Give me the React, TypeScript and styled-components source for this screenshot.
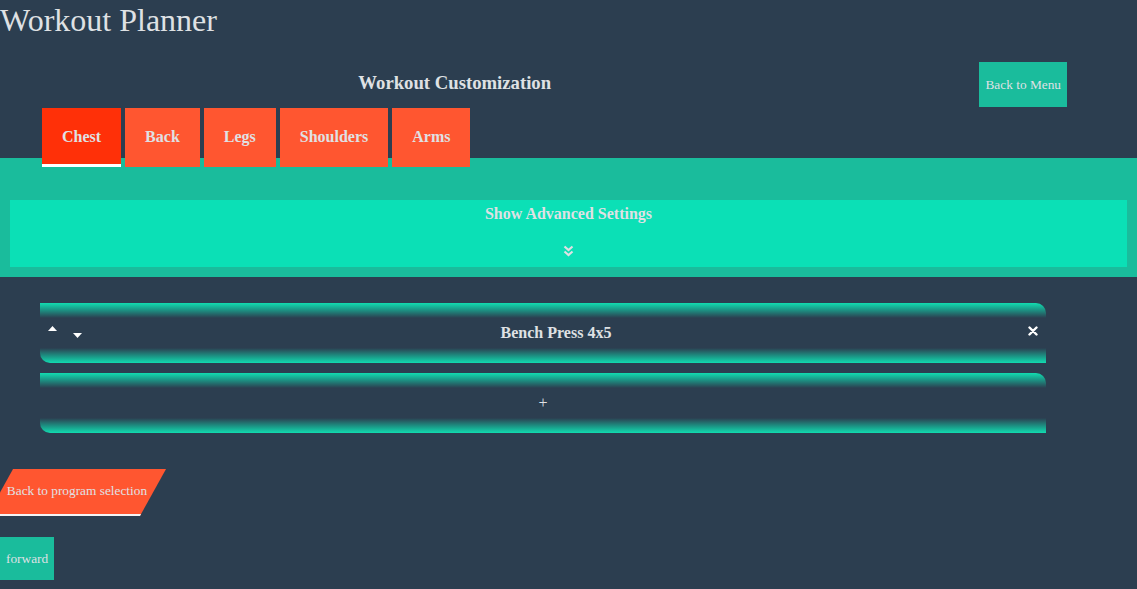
import React, { useState } from "react";
import styled, { createGlobalStyle } from "styled-components";

const BG = "#2c3e50";
const TEAL = "#1abc9c";
const TEAL_LIGHT = "#0be0b6";
const ORANGE = "#ff5630";
const ORANGE_ACTIVE = "#ff3008";
const TEXT = "#dfe1e4";

const GlobalStyle = createGlobalStyle`
  html, body {
    margin: 0;
    padding: 0;
    background: ${BG};
    color: ${TEXT};
    font-family: "Liberation Serif", "Times New Roman", serif;
  }
`;

const Page = styled.div`
  min-height: 589px;
  background: ${BG};
  overflow: hidden;
`;

const Title = styled.h1`
  margin: 0;
  padding-top: 2px;
  font-size: 32px;
  font-weight: normal;
  line-height: 37px;
`;

const HeaderRow = styled.div`
  display: flex;
  align-items: center;
  margin-top: 23px;
  padding-right: 70px;
`;

const Heading = styled.h3`
  flex: 1;
  margin: 0 70px 3px 0;
  text-align: center;
  font-size: 18.72px;
  font-weight: bold;
`;

const PlainButton = styled.button<{ $h: number }>`
  height: ${(p) => p.$h}px;
  padding: 0 6px;
  border: none;
  background: ${TEAL};
  color: ${TEXT};
  font-family: "Liberation Serif", "Times New Roman", serif;
  font-size: 13.33px;
  cursor: pointer;
`;

const TabBar = styled.div`
  position: relative;
  z-index: 1;
  display: flex;
  gap: 4px;
  margin: 1px 0 -9px 42px;
`;

const Tab = styled.button<{ $active?: boolean }>`
  height: 59px;
  padding: 0 20px 1px;
  border: none;
  background: ${(p) => (p.$active ? ORANGE_ACTIVE : ORANGE)};
  box-shadow: ${(p) => (p.$active ? "inset 0 -3px 0 #ffffff" : "none")};
  color: ${TEXT};
  font-family: "Liberation Serif", "Times New Roman", serif;
  font-size: 16px;
  font-weight: bold;
  cursor: pointer;
`;

const SettingsBand = styled.div`
  background: ${TEAL};
  padding: 42px 10px 10px;
`;

const SettingsPanel = styled.div`
  height: 67px;
  background: ${TEAL_LIGHT};
  display: flex;
  flex-direction: column;
  align-items: center;
  font-size: 16px;
  font-weight: bold;
  padding-top: 5px;
  box-sizing: border-box;
  cursor: pointer;
`;

const ChevronWrap = styled.div`
  margin-top: 22px;
  line-height: 0;
`;

const CardList = styled.div`
  display: flex;
  flex-direction: column;
  gap: 10px;
  margin: 26px 0 0 40px;
  width: 1006px;
`;

const Card = styled.div`
  height: 60px;
  border-radius: 0 10px 0 10px;
  background: linear-gradient(
    to bottom,
    #12dcb0 0px,
    #1a9d8a 6px,
    ${BG} 15px,
    ${BG} 45px,
    #1a9d8a 54px,
    #12dcb0 60px
  );
  display: flex;
  align-items: center;
  box-sizing: border-box;
`;

const Arrows = styled.div`
  display: flex;
  align-items: center;
  gap: 16px;
  padding-left: 8px;
  width: 70px;
  box-sizing: border-box;
`;

const ArrowBtn = styled.span<{ $down?: boolean }>`
  display: inline-block;
  line-height: 0;
  margin-top: ${(p) => (p.$down ? "4px" : "-10px")};
  cursor: pointer;
`;

const CardTitle = styled.div`
  flex: 1;
  text-align: center;
  font-size: 16px;
  font-weight: bold;
`;

const CloseBtn = styled.span`
  width: 44px;
  display: flex;
  justify-content: flex-end;
  padding-right: 8px;
  box-sizing: border-box;
  line-height: 0;
  margin-top: -4px;
  cursor: pointer;
`;

const AddCard = styled(Card)`
  justify-content: center;
  font-size: 16px;
  cursor: pointer;
`;

const Footer = styled.div`
  display: flex;
  flex-direction: column;
  align-items: flex-start;
  gap: 21px;
  margin-top: 36px;
`;

const SkewButton = styled.button`
  height: 47px;
  width: 153px;
  padding: 0;
  border: none;
  border-bottom: 2px solid #f4f4f4;
  background: ${ORANGE};
  transform: skewX(-29deg);
  color: ${TEXT};
  font-family: "Liberation Serif", "Times New Roman", serif;
  font-size: 13.33px;
  cursor: pointer;
`;

const Unskew = styled.span`
  display: inline-block;
  transform: skewX(29deg);
  margin: 0 1px 1px 0;
`;

const Caret = ({ down }: { down?: boolean }) => (
  <svg width="9" height="5" viewBox="0 0 9 5">
    {down ? (
      <polygon points="0,0 9,0 4.5,5" fill="#fff" />
    ) : (
      <polygon points="0,5 9,5 4.5,0" fill="#fff" />
    )}
  </svg>
);

const Times = () => (
  <svg width="10" height="10" viewBox="0 0 10 10">
    <path d="M1.5 1.5 L8.5 8.5 M8.5 1.5 L1.5 8.5" stroke="#fff" strokeWidth="2.4" strokeLinecap="round" />
  </svg>
);

const ChevronsDown = () => (
  <svg width="11" height="12" viewBox="0 0 11 12">
    <path d="M1.5 1.5 L5.5 5 L9.5 1.5 M1.5 6.5 L5.5 10 L9.5 6.5" stroke="#dfe1e4" strokeWidth="2.2" fill="none" />
  </svg>
);

const tabs = ["Chest", "Back", "Legs", "Shoulders", "Arms"];

export default function App() {
  const [active, setActive] = useState("Chest");
  return (
    <Page>
      <GlobalStyle />
      <Title>Workout Planner</Title>
      <HeaderRow>
        <Heading>Workout Customization</Heading>
        <PlainButton $h={45}>Back to Menu</PlainButton>
      </HeaderRow>
      <TabBar>
        {tabs.map((t) => (
          <Tab key={t} $active={t === active} onClick={() => setActive(t)}>
            {t}
          </Tab>
        ))}
      </TabBar>
      <SettingsBand>
        <SettingsPanel>
          <div>Show Advanced Settings</div>
          <ChevronWrap>
            <ChevronsDown />
          </ChevronWrap>
        </SettingsPanel>
      </SettingsBand>
      <CardList>
        <Card>
          <Arrows>
            <ArrowBtn>
              <Caret />
            </ArrowBtn>
            <ArrowBtn $down>
              <Caret down />
            </ArrowBtn>
          </Arrows>
          <CardTitle>Bench Press 4x5</CardTitle>
          <CloseBtn>
            <Times />
          </CloseBtn>
        </Card>
        <AddCard>+</AddCard>
      </CardList>
      <Footer>
        <SkewButton>
          <Unskew>Back to program selection</Unskew>
        </SkewButton>
        <PlainButton $h={43}>forward</PlainButton>
      </Footer>
    </Page>
  );
}
